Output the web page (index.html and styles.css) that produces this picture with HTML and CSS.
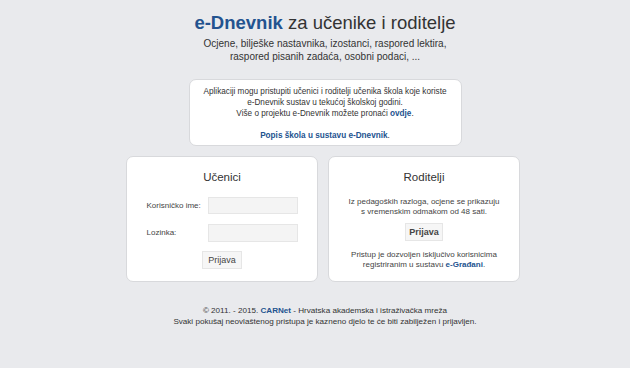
FILE: index.html
```html
<!DOCTYPE html>
<html lang="hr">
<head>
  <meta charset="UTF-8">
  <title>e-Dnevnik za učenike i roditelje</title>
  <link rel="stylesheet" href="styles.css">
</head>
<body>

<div class="page">
  <div class="header">
    <h1><span class="brand">e-Dnevnik</span> za učenike i roditelje</h1>
    <p class="lead">Ocjene, bilješke nastavnika, izostanci, raspored lektira,<br>raspored pisanih zadaća, osobni podaci, ...</p>
  </div>

  <div class="info">
    Aplikaciji mogu pristupiti učenici i roditelji učenika škola koje koriste<br>
    e-Dnevnik sustav u tekućoj školskoj godini.<br>
    Više o projektu e-Dnevnik možete pronaći <a href="#">ovdje</a>.<br>
    <br>
    <a href="#">Popis škola u sustavu e-Dnevnik</a>.
  </div>

  <div class="panels">
    <div class="panel">
      <h2>Učenici</h2>
      <form class="login">
        <div class="field">
          <label>Korisničko ime:</label>
          <input type="text">
        </div>
        <div class="field">
          <label>Lozinka:</label>
          <input type="password">
        </div>
        <button type="button" class="btn">Prijava</button>
      </form>
    </div>
    <div class="panel">
      <h2>Roditelji</h2>
      <p>Iz pedagoških razloga, ocjene se prikazuju<br>s vremenskim odmakom od 48 sati.</p>
      <button type="button" class="btn bold">Prijava</button>
      <p>Pristup je dozvoljen isključivo korisnicima<br>registriranim u sustavu <a href="#">e-Građani</a>.</p>
    </div>
  </div>

  <div class="footer">
    © 2011. - 2015. <a href="#">CARNet</a> - Hrvatska akademska i istraživačka mreža<br>
    Svaki pokušaj neovlaštenog pristupa je kazneno djelo te će biti zabilježen i prijavljen.
  </div>
</div>

</body>
</html>
```

FILE: styles.css
```css
:root {
  --bg: #e9eaed;
  --text: #333333;
  --blue: #23538f;
  --border: #d8d9dc;
}
body {
  margin: 0;
  background: var(--bg);
  color: var(--text);
  font-family: "Liberation Sans", Arial, sans-serif;
}
.page {
  padding-left: 20px;
  display: flex;
  flex-direction: column;
  align-items: center;
}
a {
  color: var(--blue);
  font-weight: bold;
  text-decoration: none;
}
.header {
  text-align: center;
  padding-top: 12px;
}
h1 {
  margin: 0;
  font-size: 18.5px;
  font-weight: normal;
  line-height: 22px;
  color: #333;
}
.brand {
  color: var(--blue);
  font-weight: bold;
}
.lead {
  margin: 3px 0 0;
  font-size: 10px;
  line-height: 13px;
  color: #333;
}
.info {
  margin-top: 16px;
  width: 273px;
  box-sizing: border-box;
  padding: 6px 0 4px;
  background: #fff;
  border: 1px solid var(--border);
  border-radius: 7px;
  text-align: center;
  font-size: 8.2px;
  line-height: 11px;
}
.panels {
  margin-top: 10px;
  margin-right: 4px;
  display: flex;
  gap: 10px;
}
.panel {
  width: 192px;
  height: 126px;
  box-sizing: border-box;
  background: #fff;
  border: 1px solid var(--border);
  border-radius: 7px;
  text-align: center;
  font-size: 8px;
  line-height: 10px;
}
h2 {
  margin: 12px 0 0;
  font-size: 11.5px;
  font-weight: normal;
  line-height: 16px;
  color: #333;
}
.login {
  margin-top: 12px;
  display: flex;
  flex-direction: column;
  align-items: center;
}
.field {
  width: 151px;
  display: flex;
  justify-content: space-between;
  align-items: center;
  margin-bottom: 10px;
}
.field label {
  font-size: 8px;
  color: #444;
}
.field input {
  width: 90px;
  height: 17px;
  box-sizing: border-box;
  background: #f4f4f4;
  border: 1px solid #e6e6e6;
  margin: 0;
  padding: 0;
}
.field + .field input {
  height: 18px;
}
.login .btn {
  margin-top: -1px;
}
.btn {
  font-family: "Liberation Sans", Arial, sans-serif;
  font-size: 9px;
  color: #444;
  background: #f6f6f6;
  border: 1px solid #e6e6e6;
  padding: 0 5px;
  height: 18px;
  cursor: pointer;
}
.btn.bold {
  font-weight: bold;
  padding: 0 3px;
}
.panel p {
  margin: 9px 0 6px;
  color: #444;
}
.panel h2 + p {
  margin-top: 12px;
}
.footer {
  margin-top: 23px;
  text-align: center;
  font-size: 8.1px;
  line-height: 11px;
  color: #333;
}
```
